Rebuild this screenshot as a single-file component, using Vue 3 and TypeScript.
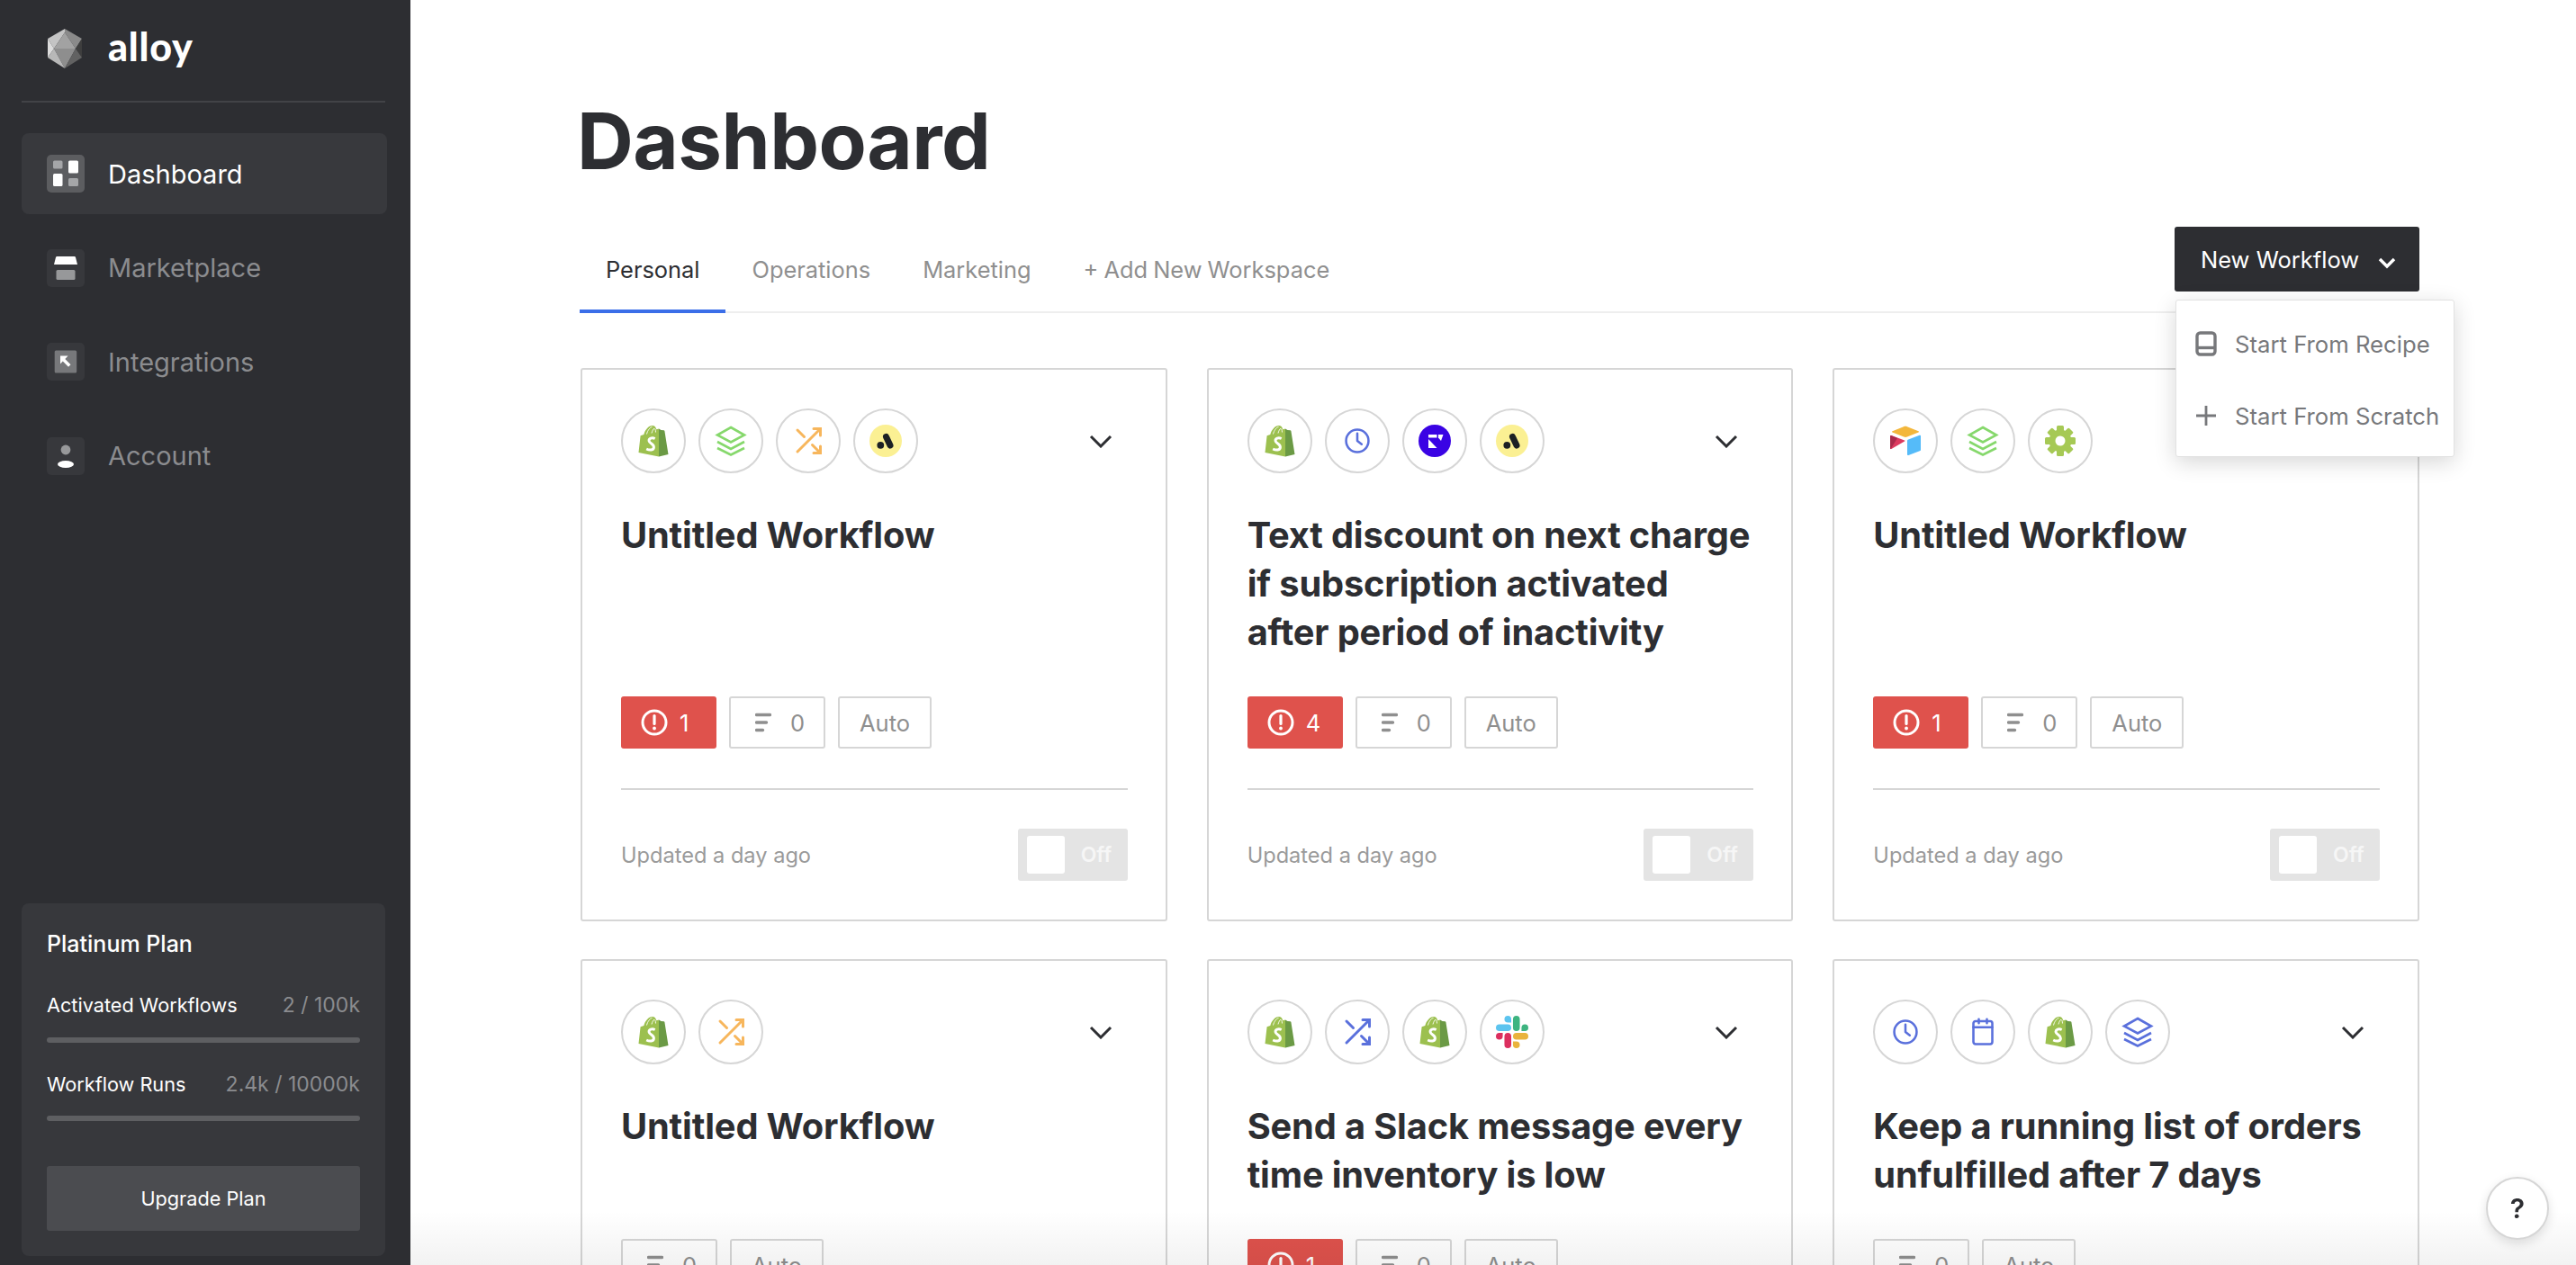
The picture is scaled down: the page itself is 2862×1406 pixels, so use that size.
<script setup lang="ts">
interface Workflow {
  icons: string[];
  title: string;
  errors: number;
}

const nav = [
  { label: 'Dashboard', icon: 'nav-dashboard', active: true },
  { label: 'Marketplace', icon: 'nav-market', active: false },
  { label: 'Integrations', icon: 'nav-integrations', active: false },
  { label: 'Account', icon: 'nav-account', active: false },
];

const tabs = ['Personal', 'Operations', 'Marketing', '+ Add New Workspace'];

const workflows: Workflow[] = [
  { icons: ['shopify', 'layers green', 'shuffle orange', 'adalo'], title: 'Untitled Workflow', errors: 1 },
  {
    icons: ['shopify', 'clock blue', 'front', 'adalo'],
    title: 'Text discount on next charge if subscription activated after period of inactivity',
    errors: 4,
  },
  { icons: ['airtable', 'layers green', 'gear'], title: 'Untitled Workflow', errors: 1 },
  { icons: ['shopify', 'shuffle orange'], title: 'Untitled Workflow', errors: 0 },
  { icons: ['shopify', 'shuffle blue', 'shopify', 'slack'], title: 'Send a Slack message every time inventory is low', errors: 1 },
  {
    icons: ['clock blue', 'calendar blue', 'shopify', 'layers blue'],
    title: 'Keep a running list of orders unfulfilled after 7 days',
    errors: 0,
  },
];

const iconId = (name: string) => '#' + name.split(' ')[0];
const iconTone = (name: string) => name.split(' ')[1] ?? '';
</script>

<template>
  <!-- shared icon sprite -->
  <svg class="sprite" aria-hidden="true">
    <symbol id="shopify" viewBox="0 0 36 36">
      <path d="M24 4.5l-2.6.8C20.600 2.500 19 1 17 1 12.500 1 8.500 6 7.300 11L3.600 12.200 1.500 31 24 35.500z" fill="#9cc04f" />
      <path d="M24 4.500V35.500L34.500 33 30.400 7c-.1-.6-.5-.8-.9-.8L26.500 6z" fill="#6b9a45" />
      <path d="M10.500 10.500C11.500 6.500 14 3 16.500 2.500M16 9.500c.6-2.500 1.800-4.600 3-5.500M20.500 8.500c0-1.500-.3-3-.8-4" fill="none" stroke="#fff" stroke-width=".9" />
      <path d="M19.700 15.500c-3.400-1.600-7-.3-6.600 2.600.4 3 5.500 3.300 5.300 7-.2 3.400-4.500 3.700-8.200 1.900" fill="none" stroke="#fff" stroke-width="3" />
    </symbol>
    <symbol id="layers" viewBox="0 0 36 36">
      <g fill="none" stroke="currentColor" stroke-width="2.600" stroke-linejoin="miter">
        <path d="M18 3L33 11.500 18 19.500 3 11.500z" />
        <path d="M3 19L18 27 33 19" />
        <path d="M3 26L18 33.500 33 26" />
      </g>
    </symbol>
    <symbol id="shuffle" viewBox="0 0 24 24">
      <g fill="none" stroke="currentColor" stroke-width="2" stroke-linecap="round">
        <path d="M16 3h5v5" />
        <path d="M4 20L21 3" />
        <path d="M21 16v5h-5" />
        <path d="M15 15l6 6" />
        <path d="M4 4l5 5" />
      </g>
    </symbol>
    <symbol id="adalo" viewBox="0 0 36 36">
      <circle cx="18" cy="18" r="18" fill="#fbf093" />
      <path d="M18.500 13.500L23 23" stroke="#1c2024" stroke-width="7" stroke-linecap="round" />
      <circle cx="12.300" cy="22.800" r="3.900" fill="#1c2024" />
    </symbol>
    <symbol id="clock" viewBox="0 0 24 24">
      <g fill="none" stroke="currentColor" stroke-width="1.700" stroke-linecap="round" stroke-linejoin="round">
        <circle cx="12" cy="12" r="8.300" />
        <path d="M12 6.500V12l3.200 2.500" />
      </g>
    </symbol>
    <symbol id="front" viewBox="0 0 36 36">
      <circle cx="18" cy="18" r="18" fill="#3a03e4" />
      <path d="M11 11h9.500v3.500H11z" fill="#fff" />
      <path d="M11 16l9.500 10H11z" fill="#fff" />
      <path d="M22 11h5.500L25 18l-3-3.500z" fill="#fff" />
    </symbol>
    <symbol id="airtable" viewBox="0 0 36 36">
      <path d="M16 2.200L3.500 7.300c-.6.200-.6 1 0 1.300l12.700 5c1.200.5 2.500.5 3.700 0l12.600-5c.6-.3.600-1.100 0-1.300L19.900 2.200c-1.200-.5-2.600-.5-3.900 0z" fill="#f3b73c" />
      <path d="M20 17.700V33c0 .7.700 1.200 1.400.9l13-5c.4-.2.600-.5.600-.9V12.700c0-.7-.7-1.200-1.400-.9l-13 5c-.4.200-.6.500-.6.900z" fill="#55bbf9" />
      <path d="M17 18.500l-14.600 8.500c-.7.400-1.400-.1-1.400-.8V12.800c0-.6.800-1 1.400-.7l14.600 5.300c.5.200.5.800 0 1.100z" fill="#dc3a5f" />
      <path d="M9 15L2 12.100c-.5-.2-1 .2-1 .7V26.200c0 .4.300.8.600.8z" fill="#a92a4b" />
    </symbol>
    <symbol id="gear" viewBox="0 0 36 36">
      <g fill="#a6c955">
        <rect x="14" y="1" width="8" height="34" rx="1.500" />
        <rect x="14" y="1" width="8" height="34" rx="1.500" transform="rotate(45 18 18)" />
        <rect x="14" y="1" width="8" height="34" rx="1.500" transform="rotate(90 18 18)" />
        <rect x="14" y="1" width="8" height="34" rx="1.500" transform="rotate(135 18 18)" />
        <circle cx="18" cy="18" r="12.500" />
      </g>
      <circle cx="18" cy="18" r="5.500" fill="#fff" />
    </symbol>
    <symbol id="slack" viewBox="0 0 24 24">
      <path d="M5.042 15.165a2.528 2.528 0 0 1-2.52 2.523A2.528 2.528 0 0 1 0 15.165a2.527 2.527 0 0 1 2.522-2.52h2.52v2.52zM6.313 15.165a2.527 2.527 0 0 1 2.521-2.52 2.527 2.527 0 0 1 2.521 2.52v6.313A2.528 2.528 0 0 1 8.834 24a2.528 2.528 0 0 1-2.521-2.522v-6.313z" fill="#dc2f5f" />
      <path d="M8.834 5.042a2.528 2.528 0 0 1-2.521-2.52A2.528 2.528 0 0 1 8.834 0a2.528 2.528 0 0 1 2.521 2.522v2.52H8.834zM8.834 6.313a2.528 2.528 0 0 1 2.521 2.521 2.528 2.528 0 0 1-2.521 2.521H2.522A2.528 2.528 0 0 1 0 8.834a2.528 2.528 0 0 1 2.522-2.521h6.312z" fill="#5cc4ef" />
      <path d="M18.956 8.834a2.528 2.528 0 0 1 2.522-2.521A2.528 2.528 0 0 1 24 8.834a2.528 2.528 0 0 1-2.522 2.521h-2.522V8.834zM17.688 8.834a2.528 2.528 0 0 1-2.523 2.521 2.527 2.527 0 0 1-2.52-2.521V2.522A2.527 2.527 0 0 1 15.165 0a2.528 2.528 0 0 1 2.523 2.522v6.312z" fill="#3db480" />
      <path d="M15.165 18.956a2.528 2.528 0 0 1 2.523 2.522A2.528 2.528 0 0 1 15.165 24a2.527 2.527 0 0 1-2.52-2.522v-2.522h2.52zM15.165 17.688a2.527 2.527 0 0 1-2.52-2.523 2.526 2.526 0 0 1 2.52-2.52h6.313A2.527 2.527 0 0 1 24 15.165a2.528 2.528 0 0 1-2.522 2.523h-6.313z" fill="#e9b33d" />
    </symbol>
    <symbol id="calendar" viewBox="0 0 24 24">
      <g fill="none" stroke="currentColor" stroke-width="1.700" stroke-linecap="round">
        <rect x="5" y="4" width="14" height="17" rx="1.600" />
        <path d="M5 8.500h14M9 2.500V5.500M15 2.500V5.500" />
      </g>
    </symbol>
    <symbol id="nav-dashboard" viewBox="0 0 42 42">
      <rect x="7" y="6.500" width="10.500" height="9" rx="1.500" fill="#a5a6a8" />
      <rect x="24" y="6.500" width="11" height="14" rx="1.500" fill="#fff" />
      <rect x="7" y="21" width="10.500" height="14" rx="1.500" fill="#fff" />
      <rect x="24" y="26" width="11" height="9" rx="1.500" fill="#a5a6a8" />
    </symbol>
    <symbol id="nav-market" viewBox="0 0 42 42">
      <path d="M10 9c.2-.6.700-1 1.300-1h19.400c.6 0 1.100.4 1.300 1l2 8H8z" fill="#fff" />
      <rect x="10.500" y="23" width="21" height="11" rx="1.500" fill="#97989a" />
    </symbol>
    <symbol id="nav-integrations" viewBox="0 0 42 42">
      <rect x="8.700" y="8.500" width="24.500" height="25" rx="1.500" fill="#77787b" />
      <path d="M15 14.500v9l2.800-2.900 6.200 6.200 2.500-2.500-6.200-6.200 3.300-3.600z" fill="#fff" />
    </symbol>
    <symbol id="nav-account" viewBox="0 0 42 42">
      <circle cx="21" cy="14" r="5.400" fill="#97989a" />
      <ellipse cx="21" cy="30" rx="9" ry="4" fill="#fff" />
    </symbol>
  </svg>

  <div class="page">
    <aside class="sidebar">
      <div class="logo">
        <svg class="logo-mark" viewBox="0 0 38 44">
          <path d="M19 0L0 11 7 22 19 4z" fill="#c4c4c4" />
          <path d="M19 0L38 11 31 22 19 4z" fill="#8a8a8a" />
          <path d="M0 11V32L7 22z" fill="#dcdcdc" />
          <path d="M38 11V32L31 22z" fill="#3e3e3e" />
          <path d="M19 4L7 22H31z" fill="#a2a2a2" />
          <path d="M7 22H31L19 44z" fill="#8e8e8e" />
          <path d="M0 32L7 22 19 44z" fill="#b8b8b8" />
          <path d="M38 32L31 22 19 44z" fill="#626262" />
        </svg>
        <span class="logo-text">alloy</span>
      </div>

      <nav class="nav">
        <div v-for="item in nav" :key="item.label" class="nav-item" :class="{ active: item.active }">
          <span class="nav-icon">
            <svg width="42" height="42"><use :href="'#' + item.icon" /></svg>
          </span>
          {{ item.label }}
        </div>
      </nav>

      <div class="plan">
        <div class="plan-title">Platinum Plan</div>
        <div class="plan-row"><span>Activated Workflows</span><span class="plan-num">2 / 100k</span></div>
        <div class="plan-bar"></div>
        <div class="plan-row"><span>Workflow Runs</span><span class="plan-num">2.4k / 10000k</span></div>
        <div class="plan-bar"></div>
        <div class="upgrade">Upgrade Plan</div>
      </div>
    </aside>

    <main class="main">
      <h1>Dashboard</h1>

      <div class="tabbar">
        <div class="tabs">
          <div v-for="(t, i) in tabs" :key="t" class="tab" :class="{ active: i === 0 }">{{ t }}</div>
        </div>
        <div class="new-wrap">
          <button class="new-btn">
            New Workflow
            <svg width="22" height="14" viewBox="0 0 22 14"><path d="M3 3l8 8 8-8" fill="none" stroke="#fff" stroke-width="3.400" /></svg>
          </button>
          <div class="menu">
            <div class="menu-item">
              <svg class="menu-icon" width="24" height="28" viewBox="0 0 24 28">
                <rect x="2" y="2" width="20" height="24" rx="3.500" fill="none" stroke="#77787b" stroke-width="3.400" />
                <path d="M3 18.500h18" stroke="#77787b" stroke-width="3.400" />
              </svg>
              Start From Recipe
            </div>
            <div class="menu-item">
              <svg class="menu-icon" width="24" height="24" viewBox="0 0 24 24">
                <path d="M12 1v22M1 12h22" stroke="#77787b" stroke-width="2.800" />
              </svg>
              Start From Scratch
            </div>
          </div>
        </div>
      </div>

      <section class="grid">
        <article v-for="(w, i) in workflows" :key="i" class="card">
          <header class="card-head">
            <div class="circles">
              <span v-for="(ic, j) in w.icons" :key="j" class="circle" :class="iconTone(ic)">
                <svg width="36" height="36"><use :href="iconId(ic)" /></svg>
              </span>
            </div>
            <svg class="chevron" width="26" height="15" viewBox="0 0 26 15"><path d="M2 2l11 11L24 2" fill="none" stroke="#2d2e32" stroke-width="3" /></svg>
          </header>

          <h2 class="card-title">{{ w.title }}</h2>

          <div class="badges">
            <span v-if="w.errors" class="badge error">
              <svg width="30" height="30" viewBox="0 0 30 30">
                <circle cx="15" cy="15" r="13" fill="none" stroke="#fff" stroke-width="3" />
                <path d="M15 7.500v9" stroke="#fff" stroke-width="3.200" stroke-linecap="round" />
                <circle cx="15" cy="21.500" r="1.900" fill="#fff" />
              </svg>
              {{ w.errors }}
            </span>
            <span class="badge count">
              <svg width="18" height="22" viewBox="0 0 18 22">
                <path d="M1.500 2.500h15M1.500 11h11M1.500 19.500h7" stroke="#8f8f8f" stroke-width="3.400" stroke-linecap="round" />
              </svg>
              0
            </span>
            <span class="badge auto">Auto</span>
          </div>

          <div class="card-foot">
            <span class="updated">Updated a day ago</span>
            <div class="toggle"><span class="knob"></span><span class="off">Off</span></div>
          </div>
        </article>
      </section>

      <div class="fade"></div>
    </main>

    <button class="help">?</button>
  </div>
</template>

<style>
html,
body {
  overflow: hidden;
}
</style>

<style scoped>
.sprite {
  position: absolute;
  width: 0;
  height: 0;
}

.page {
  display: flex;
  height: 100vh;
  overflow: hidden;
  font-family: Inter, 'Liberation Sans', sans-serif;
  color: #2d2e32;
  background: #fff;
}

.sidebar {
  width: 456px;
  flex-shrink: 0;
  display: flex;
  flex-direction: column;
  padding: 0 28px 10px 24px;
  box-sizing: border-box;
  background: #2d2e32;
}

.logo {
  height: 114px;
  flex-shrink: 0;
  display: flex;
  align-items: flex-start;
  gap: 29px;
  padding: 32px 0 0 29px;
  box-sizing: border-box;
  border-bottom: 2px solid #424347;
  margin-bottom: 34px;
}

.logo-mark {
  width: 38px;
  height: 44px;
}

.logo-text {
  font-family: Lato, sans-serif;
  font-weight: 900;
  font-size: 43px;
  line-height: 44px;
  letter-spacing: 0.8px;
  margin-top: -2px;
  color: #fff;
}

.nav {
  display: flex;
  flex-direction: column;
  gap: 14.5px;
  margin-right: -2px;
}

.nav-item {
  height: 90px;
  display: flex;
  align-items: center;
  gap: 26px;
  padding-left: 28px;
  border-radius: 8px;
  font-size: 29px;
  color: #8b8c8f;
}

.nav-item.active {
  background: #38393d;
  color: #fff;
}

.nav-icon {
  display: flex;
  width: 42px;
  height: 42px;
  border-radius: 5px;
  background: #37383c;
}

.nav-item.active .nav-icon {
  background: #5c5d60;
}

.plan {
  margin-top: auto;
  height: 392px;
  padding: 28px;
  box-sizing: border-box;
  border-radius: 8px;
  background: #37383c;
  color: #fff;
}

.plan-title {
  font-size: 25px;
  font-weight: 500;
  line-height: 34px;
  margin-bottom: 37px;
}

.plan-row {
  display: flex;
  justify-content: space-between;
  align-items: center;
  font-size: 21.7px;
  line-height: 28px;
}

.plan-num {
  font-size: 23px;
  color: #8b8c8f;
}

.plan-bar {
  height: 6px;
  border-radius: 3px;
  background: #5e5f62;
  margin: 21.500px 0 32px;
}

.upgrade {
  height: 72px;
  margin-top: 50px;
  display: flex;
  align-items: center;
  justify-content: center;
  border-radius: 3px;
  background: #4b4c50;
  font-size: 21.700px;
}

.main {
  position: relative;
  flex: 1;
  min-width: 0;
  padding: 100px 174px 0 188px;
}

h1 {
  margin: 0 0 38px -3px;
  font-size: 87px;
  font-weight: 700;
  line-height: 114px;
  letter-spacing: -0.5px;
}

.tabbar {
  display: flex;
  justify-content: space-between;
  align-items: flex-start;
  height: 96px;
  box-sizing: border-box;
  border-bottom: 2px solid #eee;
}

.tabs {
  display: flex;
  height: 96px;
}

.tab {
  box-sizing: border-box;
  height: 96px;
  padding: 32px 29px 0;
  font-size: 25.4px;
  line-height: 32px;
  word-spacing: -1px;
  color: #8f8f8f;
}

.tab.active {
  color: #2d2e32;
  border-bottom: 4px solid #3b6ee8;
}

.new-wrap {
  position: relative;
}

.new-btn {
  width: 272px;
  height: 72px;
  display: flex;
  align-items: center;
  gap: 20px;
  padding: 0 0 0 29px;
  border: 0;
  border-radius: 3px;
  background: #2d2e32;
  color: #fff;
  font-family: inherit;
  font-size: 25.500px;
}

.new-btn svg {
  margin-top: 8px;
}

.menu {
  position: absolute;
  z-index: 3;
  top: 81px;
  left: 1px;
  width: 310px;
  height: 175px;
  padding-top: 8px;
  box-sizing: border-box;
  background: #fff;
  border: 1px solid #e2e2e2;
  border-radius: 3px;
  box-shadow: 0 6px 24px rgba(0, 0, 0, 0.16);
}

.menu-item {
  position: relative;
  height: 80px;
  display: flex;
  align-items: center;
  padding-left: 65px;
  font-size: 25.700px;
  color: #77787b;
  white-space: nowrap;
}

.menu-icon {
  position: absolute;
  left: 21px;
  top: 50%;
  transform: translateY(-50%);
}

.grid {
  display: grid;
  grid-template-columns: repeat(3, 1fr);
  gap: 42px 44px;
  margin: 61px 0 0 1px;
}

.card {
  display: flex;
  flex-direction: column;
  padding: 43px 42px 43px 43px;
  border: 2px solid #d6d6d6;
  border-radius: 3px;
}

.card-head {
  display: flex;
  align-items: center;
  justify-content: space-between;
}

.circles {
  display: flex;
  gap: 14px;
}

.circle {
  width: 72px;
  height: 72px;
  display: flex;
  align-items: center;
  justify-content: center;
  box-sizing: border-box;
  border: 2px solid #d6d6d6;
  border-radius: 50%;
}

.circle.green {
  color: #86d86c;
}

.circle.orange {
  color: #f7b65c;
}

.circle.blue {
  color: #5a70dc;
}

.chevron {
  margin-right: 17px;
}

.card-title {
  flex: 1;
  margin: 42px -2px 44px 0;
  font-size: 39.800px;
  font-weight: 700;
  line-height: 54px;
  letter-spacing: -0.15px;
}

.badges {
  display: flex;
  gap: 14px;
}

.badge {
  height: 58px;
  display: flex;
  align-items: center;
  padding: 0 20px;
  box-sizing: border-box;
  border: 2px solid #d6d6d6;
  border-radius: 3px;
  font-size: 25.500px;
  color: #8f8f8f;
}

.badge.error {
  gap: 13px;
  width: 106px;
  padding-left: 22px;
  border: 0;
  background: #df524c;
  color: #fff;
}

.badge.count {
  width: 107px;
  gap: 21px;
  padding: 0 0 0 27px;
}

.badge.auto {
  width: 104px;
  justify-content: center;
  padding: 0;
}

.card-foot {
  display: flex;
  align-items: center;
  justify-content: space-between;
  margin-top: 44px;
  padding-top: 43px;
  border-top: 2px solid #d6d6d6;
}

.updated {
  font-size: 23.600px;
  color: #9a9a9a;
}

.toggle {
  width: 122px;
  height: 58px;
  display: flex;
  align-items: center;
  padding-left: 10px;
  gap: 18px;
  box-sizing: border-box;
  border-radius: 3px;
  background: #e4e4e4;
}

.knob {
  width: 42px;
  height: 42px;
  border-radius: 3px;
  background: #fff;
}

.off {
  font-size: 23px;
  font-weight: 600;
  color: #f6f6f6;
}

.fade {
  position: absolute;
  left: 0;
  right: 0;
  bottom: 0;
  height: 60px;
  background: linear-gradient(rgba(0, 0, 0, 0), rgba(0, 0, 0, 0.05));
}

.help {
  position: fixed;
  z-index: 4;
  right: 30px;
  bottom: 28px;
  width: 70px;
  height: 70px;
  border: 2px solid #d6d6d6;
  border-radius: 50%;
  background: #fff;
  box-shadow: 0 4px 12px rgba(0, 0, 0, 0.12);
  font-family: inherit;
  font-size: 30px;
  font-weight: 600;
  color: #2d2e32;
}
</style>
